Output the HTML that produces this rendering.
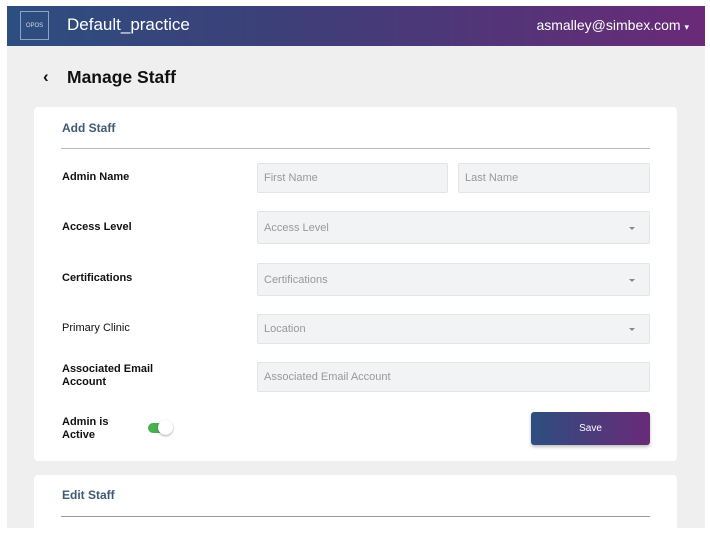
<!DOCTYPE html>
<html><head><style>
*{margin:0;padding:0;box-sizing:border-box}
body{width:710px;height:536px;background:#fff;font-family:"Liberation Sans",sans-serif;position:relative;overflow:hidden}
.hdr{position:absolute;left:7px;top:6px;width:698px;height:40px;background:linear-gradient(90deg,#2d4e80,#3d3f78 40%,#6a2a78)}
.logo{position:absolute;left:13px;top:5px;width:29px;height:29px;border:1px solid #8fa3c4;color:#cfd8e8;font-size:6px;display:flex;align-items:center;justify-content:center}
.bg{position:absolute;left:7px;top:46px;width:698px;height:482px;background:#efefef}
.card{position:absolute;left:34px;width:643px;background:#fff;border-radius:4px}
.t{position:absolute;color:#111;font-size:11px;font-weight:bold;line-height:13px}
.in{position:absolute;background:#f1f3f4;border:1px solid #e2e4e6;border-radius:2px;color:#999;font-size:11px;padding-left:6px;display:flex;align-items:center}
.in .c{position:absolute;right:14px;top:50%;margin-top:-1px;border-left:3px solid transparent;border-right:3px solid transparent;border-top:3px solid #888}
</style></head><body>
<div class="hdr"><div class="logo">OPOS</div>
<div style="position:absolute;left:60px;top:9px;color:#fff;font-size:17px">Default_practice</div>
<div style="position:absolute;right:16px;top:11px;color:#fff;font-size:14px">asmalley@simbex.com <span style="font-size:9px">▾</span></div></div>
<div class="bg"></div>
<div style="position:absolute;left:43px;top:67px;font-size:17px;font-weight:bold;color:#111">‹</div>
<div style="position:absolute;left:67px;top:67px;font-size:17.5px;font-weight:bold;color:#111">Manage Staff</div>
<div class="card" style="top:107px;height:354px"></div>
<div class="card" style="top:475px;height:61px"></div>
<div style="position:absolute;left:62px;top:121px;font-size:12px;font-weight:bold;color:#3f5a75">Add Staff</div>
<div style="position:absolute;left:61px;top:148px;width:589px;height:1px;background:#bbb"></div>
<div class="t" style="left:62px;top:171px">Admin Name</div>
<div class="t" style="left:62px;top:221px">Access Level</div>
<div class="t" style="left:62px;top:272px">Certifications</div>
<div class="t" style="left:62px;top:322px;font-weight:normal">Primary Clinic</div>
<div class="t" style="left:62px;top:363px">Associated Email<br>Account</div>
<div class="t" style="left:62px;top:416px">Admin is<br>Active</div>
<div class="in" style="left:257px;top:163px;width:191px;height:30px">First Name</div>
<div class="in" style="left:458px;top:163px;width:192px;height:30px">Last Name</div>
<div class="in" style="left:257px;top:211px;width:393px;height:33px">Access Level<span class="c"></span></div>
<div class="in" style="left:257px;top:263px;width:393px;height:33px">Certifications<span class="c"></span></div>
<div class="in" style="left:257px;top:314px;width:393px;height:30px">Location<span class="c"></span></div>
<div class="in" style="left:257px;top:362px;width:393px;height:30px">Associated Email Account</div>
<div style="position:absolute;left:148px;top:423px;width:22px;height:10px;border-radius:5px;background:#4caf50"></div>
<div style="position:absolute;left:158px;top:420px;width:15px;height:15px;border-radius:50%;background:#fff;box-shadow:0 1px 2px rgba(0,0,0,.35)"></div>
<div style="position:absolute;left:531px;top:412px;width:119px;height:33px;border-radius:3px;background:linear-gradient(90deg,#2d4e80,#6a2a78);color:#fff;font-size:10px;display:flex;align-items:center;justify-content:center;box-shadow:0 2px 3px rgba(0,0,0,.25)">Save</div>
<div style="position:absolute;left:62px;top:488px;font-size:12px;font-weight:bold;color:#3f5a75">Edit Staff</div>
<div style="position:absolute;left:61px;top:516px;width:589px;height:1px;background:#999"></div>
</body></html>
